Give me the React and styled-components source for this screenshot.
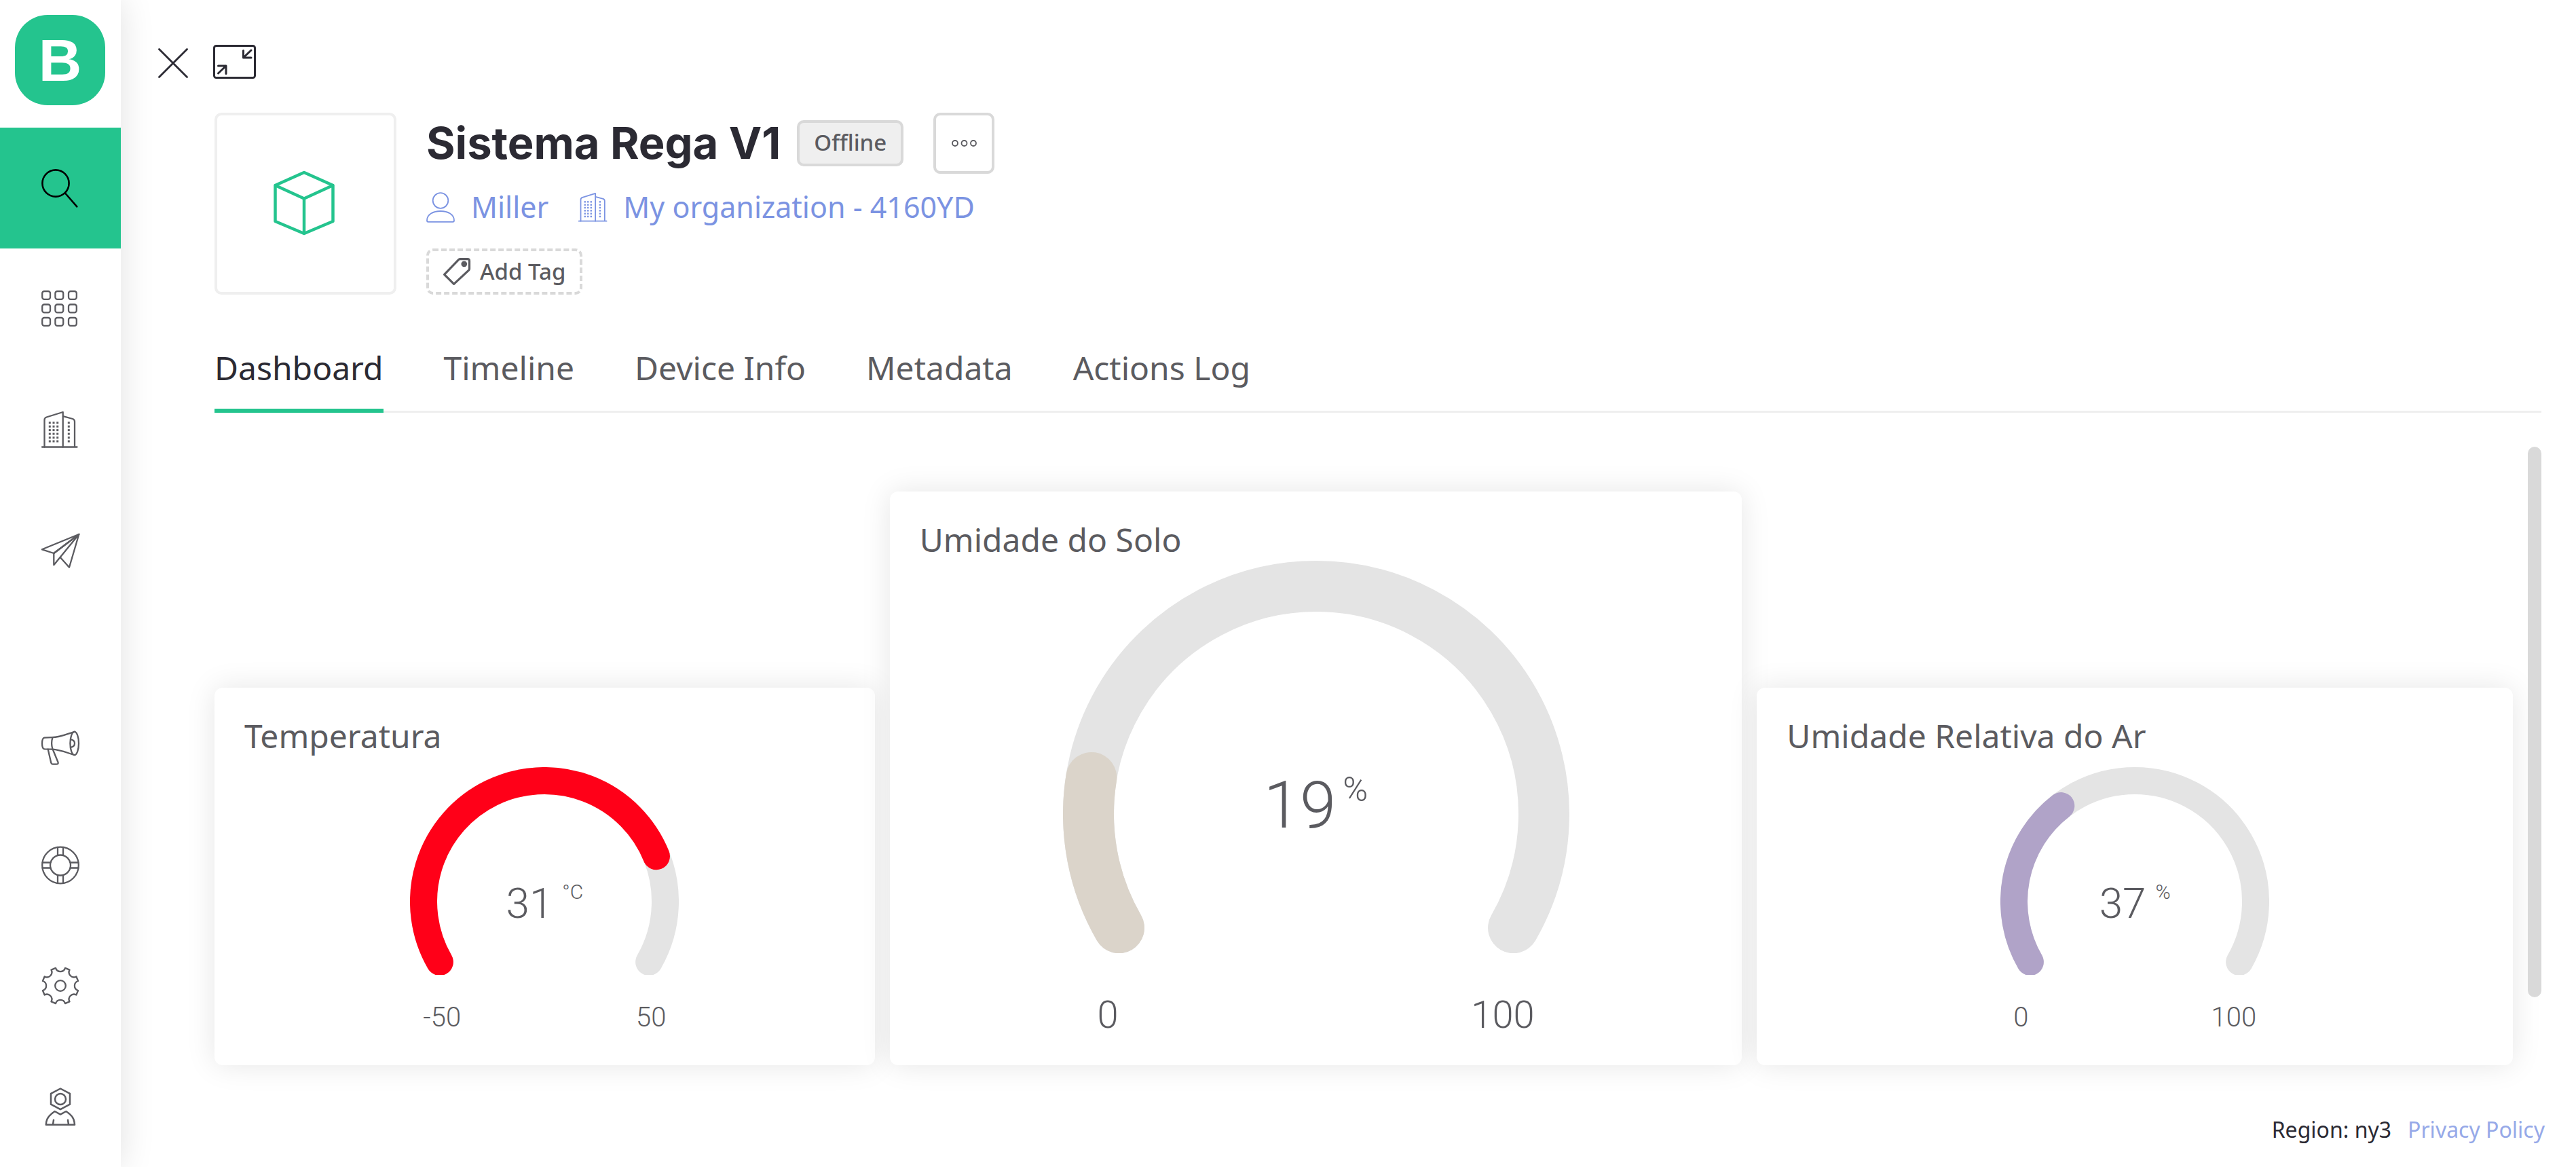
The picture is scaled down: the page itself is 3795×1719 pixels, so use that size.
import React from "react";
import styled, { createGlobalStyle } from "styled-components";

const color = {
  green: "#24c48e",
  ink: "#2b2a33",
  text: "#5b5b60",
  link: "#7b93e2",
  line: "#efefef",
  border: "#d9d9d9",
  track: "#e4e4e4",
};

const sans = `"Noto Sans", "Open Sans", sans-serif`;
const numerals = `Roboto, sans-serif`;

const GlobalStyle = createGlobalStyle`
  *, *::before, *::after { box-sizing: border-box; }
  body { margin: 0; background: #fff; color: ${color.ink}; font-family: ${sans}; }
  button { font: inherit; margin: 0; padding: 0; cursor: pointer; }
  h1, h2, p { margin: 0; }
  a { color: inherit; text-decoration: none; }
`;

/* ---------- Shell ---------- */

const Shell = styled.div`
  display: flex;
  min-height: 100vh;
`;

const Sidebar = styled.aside`
  display: flex;
  flex-direction: column;
  flex: none;
  width: 178px;
  height: 100vh;
  background: #fff;
  box-shadow: 0 0 48px rgba(0, 0, 0, 0.12);
`;

const Logo = styled.a`
  display: flex;
  align-items: center;
  justify-content: center;
  width: 133px;
  height: 133px;
  margin: 22px 22px 33px;
  border-radius: 48px;
  background: ${color.green};
  color: #fff;
  font: 700 88px/1 "Liberation Sans", sans-serif;
`;

const NavGroup = styled.nav`
  display: flex;
  flex-direction: column;

  &:last-child {
    margin-top: auto;
  }
`;

const NavItem = styled.a`
  display: flex;
  align-items: center;
  justify-content: center;
  height: 178px;
  color: ${(p) => (p.$active ? "#000" : color.text)};
  background: ${(p) => (p.$active ? color.green : "transparent")};
`;

const Glyph = styled.svg`
  display: block;
  flex: none;
  overflow: visible;
  fill: none;
  stroke: currentColor;
  stroke-width: ${(p) => p.$stroke || 2.3};
  stroke-linecap: round;
  stroke-linejoin: round;

  .solid {
    fill: currentColor;
    stroke: none;
  }
`;

const Main = styled.main`
  display: flex;
  flex-direction: column;
  flex: 1;
  min-width: 0;
`;

const TopBar = styled.div`
  display: flex;
  align-items: center;
  gap: 37px;
  padding: 66px 0 50px 55px;
`;

const IconButton = styled.button`
  display: flex;
  border: 0;
  background: none;
  color: ${color.ink};
`;

const Content = styled.div`
  display: flex;
  flex-direction: column;
  padding: 0 51px 0 138px;
`;

/* ---------- Device header ---------- */

const Header = styled.header`
  display: flex;
  gap: 44px;
`;

const Thumb = styled.div`
  display: flex;
  align-items: center;
  justify-content: center;
  flex: none;
  width: 268px;
  height: 268px;
  border: 4px solid ${color.line};
  border-radius: 10px;
  color: ${color.green};
`;

const Details = styled.div`
  display: flex;
  flex-direction: column;
  align-items: flex-start;
`;

const TitleRow = styled.div`
  display: flex;
  align-items: center;
  height: 90px;
`;

const Title = styled.h1`
  font: 700 65px/90px Inter, sans-serif;
`;

const Badge = styled.span`
  height: 68px;
  margin: 0 44px 0 24px;
  padding: 0 21px;
  border: 4px solid ${color.border};
  border-radius: 10px;
  background: ${color.line};
  color: ${color.text};
  font-size: 33px;
  font-weight: 500;
  line-height: 58px;
`;

const MoreButton = styled.button`
  display: flex;
  align-items: center;
  justify-content: center;
  width: 90px;
  height: 90px;
  border: 4px solid ${color.border};
  border-radius: 10px;
  background: #fff;
  color: ${color.text};
`;

const MetaRow = styled.div`
  display: flex;
  gap: 44px;
  margin: 22px 0 34px;
`;

const MetaLink = styled.a`
  display: flex;
  align-items: center;
  gap: 24px;
  color: ${color.link};
  font-size: 43px;
  line-height: 54px;
`;

const TagButton = styled.button`
  display: flex;
  align-items: center;
  gap: 14px;
  height: 68px;
  padding: 0 21px;
  border: 4px dashed ${color.border};
  border-radius: 10px;
  background: #fff;
  color: ${color.text};
  font-size: 33px;
  font-weight: 500;
  line-height: 58px;
`;

/* ---------- Tabs ---------- */

const Tabs = styled.div`
  display: flex;
  gap: 89px;
  margin-top: 81px;
  box-shadow: inset 0 -3px ${color.line};
`;

const Tab = styled.button`
  padding-bottom: 33px;
  border: 0;
  border-bottom: 6px solid ${(p) => (p.$active ? color.green : "transparent")};
  background: none;
  color: ${(p) => (p.$active ? color.ink : color.text)};
  font-size: 48px;
  line-height: 54px;
`;

/* ---------- Dashboard ---------- */

const Board = styled.div`
  display: flex;
  gap: 22px;
  margin-top: 50px;
`;

const Cards = styled.div`
  display: grid;
  grid-template-columns: 973fr 1256fr 1114fr;
  align-items: end;
  gap: 22px;
  flex: 1;
  padding-top: 66px;
`;

const ScrollTrack = styled.div`
  flex: none;
  width: 20px;
`;

const ScrollThumb = styled.div`
  height: 89%;
  border-radius: 10px;
  background: ${color.border};
`;

const Card = styled.section`
  padding: 44px;
  border-radius: 12px;
  background: #fff;
  box-shadow: 0 0 44px rgba(0, 0, 0, 0.1);
`;

const CardTitle = styled.h2`
  color: ${color.text};
  font-size: 48px;
  font-weight: 400;
  line-height: 54px;
`;

const GaugeBody = styled.div`
  display: flex;
  flex-direction: column;
  align-items: center;
  padding-top: ${(p) => (p.$large ? 4 : 19)}px;
  color: ${color.text};
  font-family: ${numerals};
  font-weight: 300;
`;

const Dial = styled.div`
  display: grid;
  justify-items: center;

  > * {
    grid-area: 1 / 1;
  }
`;

const Arc = styled.svg`
  display: block;
  fill: none;
  stroke-linecap: round;
`;

const Reading = styled.p`
  display: flex;
  align-items: flex-start;
  gap: ${(p) => (p.$large ? 10 : 14)}px;
  padding-top: ${(p) => (p.$large ? 312 : 168)}px;
  font-size: ${(p) => (p.$large ? 96 : 62)}px;
  line-height: ${(p) => (p.$large ? 96 : 66)}px;
`;

const Unit = styled.span`
  font-size: ${(p) => (p.$large ? 50 : 30)}px;
  line-height: ${(p) => (p.$large ? 50 : 32)}px;
`;

const Range = styled.div`
  display: flex;
  justify-content: space-between;
  width: ${(p) => (p.$large ? 644 : 358)}px;
  margin-top: ${(p) => (p.$large ? 61 : 36)}px;
  font-size: ${(p) => (p.$large ? 56 : 40)}px;
  line-height: ${(p) => (p.$large ? 60 : 53)}px;
`;

const Footer = styled.footer`
  display: flex;
  justify-content: flex-end;
  gap: 24px;
  margin-top: auto;
  padding: 0 46px 33px;
  font-size: 32px;
  line-height: 44px;
`;

const FooterLink = styled.a`
  color: #96a9e8;
`;

/* ---------- Icons ---------- */

const SearchIcon = () => (
  <Glyph width="56" height="56" viewBox="0 0 56 56" $stroke={2.6}>
    <circle cx="21" cy="21" r="19.6" />
    <path d="M35 35.5L52.3 55.3" />
  </Glyph>
);

const GridIcon = () => (
  <Glyph width="56" height="56" viewBox="0 0 56 56">
    {[2, 21.5, 41].map((y) =>
      [1.2, 20.4, 40].map((x) => (
        <rect key={`${x}-${y}`} x={x} y={y} width="11.8" height="11.8" rx="3" />
      ))
    )}
  </Glyph>
);

const BuildingIcon = ({ width = 56, height = 56, box = "0 0 56 56", stroke }) => (
  <Glyph width={width} height={height} viewBox={box} $stroke={stroke}>
    <path d="M4.5 53.5V13.5q0-3 3-4L31.7 2v51.5" />
    <path d="M32 8.2l14 3.8q3 1 3 4v37.5M1 53.5h51.5" />
    {[17.7, 23.2, 28.6, 34.1, 39.6, 45].map((y) =>
      [12.3, 18, 23.7, 40.3].map((x) => (
        <rect
          key={`${x}-${y}`}
          className="solid"
          x={x - 1.5}
          y={y - 1.5}
          width="3"
          height="3"
        />
      ))
    )}
  </Glyph>
);

const PlaneIcon = () => (
  <Glyph width="56" height="56" viewBox="0 0 56 56">
    <path d="M55.3 4L.9 26.3 18.3 32z" />
    <path d="M18.3 32v17.3L55.3 4M28 38.3l13 14.4L55.3 4" />
    <path d="M55.3 4L18.3 32" />
  </Glyph>
);

const MegaphoneIcon = () => (
  <Glyph width="56" height="56" viewBox="0 0 56 56">
    <path d="M48.7 9.8C38 13 28 18 15.7 18.2L4.5 18.6Q1 19 1 27t3.5 8.3l11.2.4C28 36.5 38 41 48.7 44" />
    <ellipse cx="48.7" cy="27" rx="6.3" ry="17.1" />
    <path d="M16.5 18.2q-2.8 8.8 0 17.5M43.4 21.2q5.6 1.2 5.6 5.8t-5.6 5.8" />
    <path d="M9.7 35.7l4.6 20q.6 2 2.3 2H22q3.4 0 2.5-3L16.8 36" />
  </Glyph>
);

const LifebuoyIcon = () => (
  <Glyph width="56" height="56" viewBox="0 0 56 56">
    <circle cx="28" cy="28.5" r="26.8" />
    <circle cx="28" cy="28.5" r="15" />
    <path d="M24 2v11.8M32 2v11.8M24 43.2V55M32 43.2V55M1.5 24.5h11.8M1.5 32.5h11.8M42.7 24.5h11.8M42.7 32.5h11.8" />
  </Glyph>
);

const gearPath = (() => {
  const at = (deg) => {
    const a = (deg * Math.PI) / 180;
    return `${(28 + 27 * Math.cos(a)).toFixed(2)} ${(28 + 27 * Math.sin(a)).toFixed(2)}`;
  };
  let d = `M${at(-15)}`;
  for (let k = 0; k < 8; k += 1) {
    d += `A7.3 7.3 0 0 0 ${at(45 * k + 15)}L${at(45 * k + 30)}`;
  }
  return `${d}Z`;
})();

const GearIcon = () => (
  <Glyph width="56" height="56" viewBox="0 0 56 56">
    <path d={gearPath} />
    <circle cx="28" cy="28" r="7.8" />
  </Glyph>
);

const ProfileIcon = () => (
  <Glyph width="56" height="56" viewBox="0 0 56 56" $stroke={2.5}>
    <path d="M28 1.5l14 7.4v15.8L28 32.2l-14-7.5V8.9z" />
    <circle cx="28" cy="17" r="8" />
    <path d="M19.7 35l8.3 4.6 8.3-4.6q9 6 11 11.5 1.5 4 1.7 8.2H6.8q0-4.2 1.7-8.2Q11 41 19.7 35zM18 47.8l-1 6.5M39 47.8l1 6.5" />
  </Glyph>
);

const CloseIcon = () => (
  <Glyph width="44" height="44" viewBox="0 0 44 44" $stroke={2.8}>
    <path d="M1.5 3.5l41 41M42.5 3.5l-41 41" />
  </Glyph>
);

const CollapseIcon = () => (
  <Glyph width="63" height="50" viewBox="0 0 63 50" $stroke={3}>
    <rect x="1.5" y="1.5" width="60" height="47" rx="3" />
    <path d="M44.5 8.5V19H56M56 8L44.5 19M7.5 31h11.5v11.5M7.5 42L19 31" />
  </Glyph>
);

const CubeIcon = () => (
  <Glyph width="95" height="98" viewBox="0 0 95 98" $stroke={4.5}>
    <path d="M45 3l42.5 19v53L45 93 2.5 75V22zM2.5 22L45 41.5 87.5 22M45 41.5V93" />
  </Glyph>
);

const UserIcon = () => (
  <Glyph width="42" height="45" viewBox="0 0 42 45" $stroke={1.8}>
    <circle cx="21" cy="12.5" r="11.3" />
    <path d="M2.8 43.8h36.4q1.8 0 1.8-2.3C41 33 32 28 21 28S1 33 1 41.5q0 2.3 1.8 2.3z" />
  </Glyph>
);

const TagIcon = () => (
  <Glyph width="40" height="40" viewBox="0 0 40 40" $stroke={3.2}>
    <path d="M24.5 1.6H36q2.5 0 2.5 2.5v11.6q0 1.5-1 2.5L15.7 38.4 1.6 24.3 22.5 2.6q.8-1 2-1z" />
    <circle className="solid" cx="30.8" cy="8.8" r="4.4" />
  </Glyph>
);

const DotsIcon = () => (
  <Glyph width="37" height="10" viewBox="0 0 37 10" $stroke={1.8}>
    <circle cx="5" cy="5" r="4" />
    <circle cx="18.5" cy="5" r="4" />
    <circle cx="32" cy="5" r="4" />
  </Glyph>
);

/* ---------- Gauge ---------- */

// The scale covers 240 degrees, from 30 below the horizon on the left
// to 30 below it on the right.
function arcPath(center, radius, sweep) {
  const point = (deg) => {
    const a = (deg * Math.PI) / 180;
    return `${center + radius * Math.cos(a)} ${center + radius * Math.sin(a)}`;
  };
  return `M${point(150)}A${radius} ${radius} 0 ${sweep > 180 ? 1 : 0} 1 ${point(150 + sweep)}`;
}

function Gauge({ title, value, unit, min, max, tint, large }) {
  const size = large ? 746 : 396;
  const stroke = large ? 75 : 40;
  const height = large ? 578 : 306;
  const radius = (size - stroke) / 2;
  const capAngle = ((stroke / 2 / radius) * 180) / Math.PI;
  const sweep = ((value - min) / (max - min)) * 240 - capAngle;

  return (
    <Card>
      <CardTitle>{title}</CardTitle>
      <GaugeBody $large={large}>
        <Dial>
          <Arc width={size} height={height} viewBox={`0 0 ${size} ${height}`} aria-hidden="true">
            <path d={arcPath(size / 2, radius, 240)} stroke={color.track} strokeWidth={stroke} />
            <path d={arcPath(size / 2, radius, sweep)} stroke={tint} strokeWidth={stroke} />
          </Arc>
          <Reading $large={large}>
            {value}
            <Unit $large={large}>{unit}</Unit>
          </Reading>
        </Dial>
        <Range $large={large}>
          <span>{min}</span>
          <span>{max}</span>
        </Range>
      </GaugeBody>
    </Card>
  );
}

/* ---------- Page ---------- */

const primaryNav = [
  { label: "Search", Icon: SearchIcon, active: true },
  { label: "Templates", Icon: GridIcon },
  { label: "Organization", Icon: BuildingIcon },
  { label: "Messages", Icon: PlaneIcon },
];

const secondaryNav = [
  { label: "News", Icon: MegaphoneIcon },
  { label: "Help", Icon: LifebuoyIcon },
  { label: "Settings", Icon: GearIcon },
  { label: "Profile", Icon: ProfileIcon },
];

const tabs = ["Dashboard", "Timeline", "Device Info", "Metadata", "Actions Log"];

const gauges = [
  { title: "Temperatura", value: 31, unit: "°C", min: -50, max: 50, tint: "#ff0018" },
  { title: "Umidade do Solo", value: 19, unit: "%", min: 0, max: 100, tint: "#dbd4ca", large: true },
  { title: "Umidade Relativa do Ar", value: 37, unit: "%", min: 0, max: 100, tint: "#b0a3c8" },
];

const NavList = ({ items, label }) => (
  <NavGroup aria-label={label}>
    {items.map(({ label: name, Icon, active }) => (
      <NavItem key={name} href="#" aria-label={name} $active={active}>
        <Icon />
      </NavItem>
    ))}
  </NavGroup>
);

export default function App() {
  return (
    <Shell>
      <GlobalStyle />
      <Sidebar>
        <Logo href="#">B</Logo>
        <NavList items={primaryNav} label="Main" />
        <NavList items={secondaryNav} label="Account" />
      </Sidebar>

      <Main>
        <TopBar>
          <IconButton type="button" aria-label="Close">
            <CloseIcon />
          </IconButton>
          <IconButton type="button" aria-label="Collapse">
            <CollapseIcon />
          </IconButton>
        </TopBar>

        <Content>
          <Header>
            <Thumb>
              <CubeIcon />
            </Thumb>
            <Details>
              <TitleRow>
                <Title>Sistema Rega V1</Title>
                <Badge>Offline</Badge>
                <MoreButton type="button" aria-label="More actions">
                  <DotsIcon />
                </MoreButton>
              </TitleRow>
              <MetaRow>
                <MetaLink href="#">
                  <UserIcon />
                  Miller
                </MetaLink>
                <MetaLink href="#">
                  <BuildingIcon width={42} height={45} box="0 0 53 56" stroke={2.2} />
                  My organization - 4160YD
                </MetaLink>
              </MetaRow>
              <TagButton type="button">
                <TagIcon />
                Add Tag
              </TagButton>
            </Details>
          </Header>

          <Tabs role="tablist">
            {tabs.map((name, i) => (
              <Tab key={name} type="button" role="tab" aria-selected={i === 0} $active={i === 0}>
                {name}
              </Tab>
            ))}
          </Tabs>

          <Board>
            <Cards>
              {gauges.map((gauge) => (
                <Gauge key={gauge.title} {...gauge} />
              ))}
            </Cards>
            <ScrollTrack>
              <ScrollThumb />
            </ScrollTrack>
          </Board>
        </Content>

        <Footer>
          <span>Region: ny3</span>
          <FooterLink href="#">Privacy Policy</FooterLink>
        </Footer>
      </Main>
    </Shell>
  );
}
